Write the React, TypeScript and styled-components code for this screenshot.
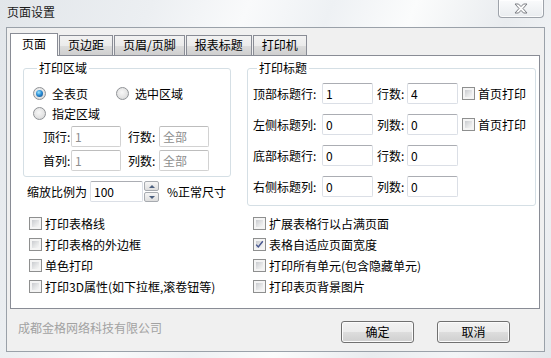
import React, { FC } from 'react';
import { styled, createGlobalStyle } from 'styled-components';

const FONT = `"Noto Sans CJK SC", "Microsoft YaHei", "DejaVu Sans", sans-serif`;

const GlobalStyle = createGlobalStyle`
  html, body {
    margin: 0;
    padding: 0;
  }
  body {
    width: 551px;
    height: 358px;
    overflow: hidden;
    font-family: ${FONT};
    font-size: 12px;
    color: #000;
  }
  * {
    box-sizing: border-box;
  }
`;

const Window = styled.div`
  width: 551px;
  height: 358px;
  display: flex;
  flex-direction: column;
  background: linear-gradient(
    112deg,
    #e2e6ea 0%,
    #eceff2 22%,
    #f9fafb 36%,
    #eef1f4 48%,
    #fbfcfc 60%,
    #e9ecef 74%,
    #f3f5f7 86%,
    #e4e7eb 100%
  );
`;

const TitleBar = styled.div`
  height: 27px;
  flex: none;
  display: flex;
  align-items: flex-start;
  justify-content: space-between;
  padding: 0 7px 0 7px;
`;

const Title = styled.div`
  margin-top: 4px;
  line-height: 16px;
  color: #1b1b1b;
`;

const CloseButton = styled.div`
  width: 46px;
  height: 18px;
  border: 1px solid #9ea3aa;
  border-top: none;
  border-radius: 0 0 4px 4px;
  background: linear-gradient(#fafbfc, #e9ecef);
  box-shadow: inset 0 0 0 1px rgba(255, 255, 255, 0.8);
  display: flex;
  align-items: center;
  justify-content: center;
`;

const Client = styled.div`
  flex: 1;
  margin: 0 6px 6px 6px;
  border: 1px solid #9aa1a9;
  background: #f0f0f0;
  display: flex;
  flex-direction: column;
  padding: 5px 4px 0 3px;
`;

const TabStrip = styled.div`
  height: 22px;
  flex: none;
  display: flex;
  align-items: flex-end;
  position: relative;
  z-index: 1;
`;

const Tab = styled.div<{ $active?: boolean }>`
  height: ${(p) => (p.$active ? 23 : 20)}px;
  margin-bottom: ${(p) => (p.$active ? -1 : 0)}px;
  padding: 0 ${(p) => (p.$active ? 11 : 8)}px;
  border: 1px solid #898c95;
  border-bottom: none;
  background: ${(p) =>
    p.$active
      ? '#fff'
      : 'linear-gradient(#f2f2f2 0%, #ebebeb 50%, #dddddd 50%, #cfcfcf 100%)'};
  line-height: ${(p) => (p.$active ? 20 : 18)}px;
  white-space: nowrap;
  & + & {
    margin-left: 1px;
  }
`;

const Panel = styled.div`
  height: 254px;
  flex: none;
  border: 1px solid #898c95;
  background: #fff;
  display: flex;
  flex-direction: column;
`;

const TopSection = styled.div`
  display: flex;
  align-items: flex-start;
  padding: 4px 0 0 12px;
  gap: 16px;
`;

const Column = styled.div<{ $w: number }>`
  width: ${(p) => p.$w}px;
  display: flex;
  flex-direction: column;
`;

const Group = styled.fieldset<{ $pl: number; $pb: number }>`
  margin: 0;
  padding: 0 0 ${(p) => p.$pb}px ${(p) => p.$pl}px;
  border: 1px solid #d5dfe5;
  border-radius: 3px;
  min-width: 0;
`;

const Legend = styled.legend`
  margin-left: 4px;
  padding: 0 2px;
  line-height: 16px;
  height: 16px;
`;

const Row = styled.div<{ $mt?: number; $ml?: number; $h?: number }>`
  display: flex;
  align-items: center;
  height: ${(p) => p.$h ?? 21}px;
  margin-top: ${(p) => p.$mt ?? 0}px;
  margin-left: ${(p) => p.$ml ?? 0}px;
  white-space: nowrap;
`;

const Label = styled.span<{ $w?: number; $ml?: number }>`
  display: inline-block;
  width: ${(p) => (p.$w ? `${p.$w}px` : 'auto')};
  margin-left: ${(p) => p.$ml ?? 0}px;
  line-height: 16px;
  flex: none;
`;

const Field = styled.input<{ $w: number }>`
  width: ${(p) => p.$w}px;
  height: 21px;
  flex: none;
  margin: 0;
  padding: 0 3px;
  border: 1px solid #dbdfe6;
  border-top-color: #abadb3;
  border-radius: 2px;
  background: #fff;
  font-family: ${FONT};
  font-size: 12px;
  color: #000;
  outline: none;
  &:disabled {
    color: #8e8e8e;
    border-color: #d2d2d2;
    border-top-color: #bdbdbd;
    background: #fff;
  }
`;

const RadioItem = styled.label<{ $w?: number }>`
  display: flex;
  align-items: center;
  width: ${(p) => (p.$w ? `${p.$w}px` : 'auto')};
  flex: none;
`;

const RadioDot = styled.span<{ $checked?: boolean }>`
  width: 13px;
  height: 13px;
  border-radius: 50%;
  border: 1px solid #8f9296;
  background: radial-gradient(circle at 45% 40%, #f7f7f7 0%, #e4e4e4 55%, #cfd1d3 100%);
  position: relative;
  flex: none;
  margin-right: 6px;
  &::after {
    content: '';
    display: ${(p) => (p.$checked ? 'block' : 'none')};
    position: absolute;
    left: 2px;
    top: 2px;
    width: 7px;
    height: 7px;
    border-radius: 50%;
    background: radial-gradient(circle at 40% 35%, #9ee6ff 0%, #2b8ed6 45%, #0b3f7c 100%);
  }
`;

const CheckBox = styled.span`
  width: 13px;
  height: 13px;
  flex: none;
  border: 1px solid #8e8f8f;
  padding: 2px;
  background: linear-gradient(135deg, #c9cbcf 0%, #e6e7e8 60%, #f6f6f6 100%) content-box, #f4f4f4;
  position: relative;
  margin-right: 3px;
  svg {
    position: absolute;
    left: 0;
    top: 0;
  }
`;

const SpinWrap = styled.div`
  width: 15px;
  height: 21px;
  margin-left: 1px;
  display: flex;
  flex-direction: column;
  gap: 1px;
  flex: none;
`;

const SpinButton = styled.div<{ $down?: boolean }>`
  flex: 1;
  border: 1px solid #a7abb0;
  border-radius: 2px;
  background: linear-gradient(#f6f6f6, #dedede);
  display: flex;
  align-items: center;
  justify-content: center;
  &::after {
    content: '';
    width: 0;
    height: 0;
    border-left: 3px solid transparent;
    border-right: 3px solid transparent;
    ${(p) =>
      p.$down ? 'border-top: 3px solid #4c607f;' : 'border-bottom: 3px solid #4c607f;'}
  }
`;

const OptionGrid = styled.div`
  display: grid;
  grid-template-columns: 224px 1fr;
  grid-auto-rows: 21px;
  margin-top: 7px;
  padding-left: 18px;
`;

const OptionItem = styled.label<{ $ml?: number }>`
  display: flex;
  align-items: center;
  white-space: nowrap;
  margin-left: ${(p) => p.$ml ?? 0}px;
`;

const Footer = styled.div`
  flex: 1;
  display: flex;
  align-items: flex-start;
  padding: 0 30px 0 8px;
`;

const Company = styled.div`
  margin-top: 11px;
  line-height: 16px;
  color: #a2a2a2;
`;

const Buttons = styled.div`
  margin-left: auto;
  margin-top: 12px;
  display: flex;
  gap: 23px;
`;

const PushButton = styled.button`
  width: 73px;
  height: 22px;
  margin: 0;
  padding: 0;
  border: 1px solid #707070;
  border-radius: 3px;
  background: linear-gradient(#f2f2f2 0%, #ebebeb 50%, #dddddd 50%, #cfcfcf 100%);
  box-shadow: inset 0 0 0 1px #fbfbfb;
  font-family: ${FONT};
  font-size: 12px;
  color: #000;
  line-height: 18px;
`;

const Radio: FC<{ label: string; checked?: boolean; w?: number }> = ({ label, checked, w }) => (
  <RadioItem $w={w}>
    <RadioDot $checked={checked} />
    <span>{label}</span>
  </RadioItem>
);

const Check: FC<{ checked?: boolean }> = ({ checked }) => (
  <CheckBox>
    {checked && (
      <svg width="11" height="11" viewBox="0 0 11 11">
        <path d="M2.2 5.6 L4.3 8 L8.8 2.2" fill="none" stroke="#46558f" strokeWidth="1.4" />
      </svg>
    )}
  </CheckBox>
);

const Option: FC<{ label: string; checked?: boolean; ml?: number }> = ({ label, checked, ml }) => (
  <OptionItem $ml={ml}>
    <Check checked={checked} />
    <span>{label}</span>
  </OptionItem>
);

const CloseGlyph: FC = () => (
  <svg width="14" height="11" viewBox="0 0 14 11">
    <polygon
      points="1,1 4.5,1 7,3.6 9.5,1 13,1 9,5.5 13,10 9.5,10 7,7.4 4.5,10 1,10 5,5.5"
      fill="#fbfbfb"
      stroke="#7a7d82"
      strokeWidth="1"
      strokeLinejoin="round"
    />
  </svg>
);

const titleRows = [
  { label: '顶部标题行:', first: '1', countLabel: '行数:', count: '4', firstPage: true },
  { label: '左侧标题列:', first: '0', countLabel: '列数:', count: '0', firstPage: true },
  { label: '底部标题行:', first: '0', countLabel: '行数:', count: '0', firstPage: false },
  { label: '右侧标题列:', first: '0', countLabel: '列数:', count: '0', firstPage: false },
];

const options: [string, boolean][] = [
  ['打印表格线', false],
  ['扩展表格行以占满页面', false],
  ['打印表格的外边框', false],
  ['表格自适应页面宽度', true],
  ['单色打印', false],
  ['打印所有单元(包含隐藏单元)', false],
  ['打印3D属性(如下拉框,滚卷钮等)', false],
  ['打印表页背景图片', false],
];

const tabs = ['页面', '页边距', '页眉/页脚', '报表标题', '打印机'];

const App: FC = () => (
  <>
    <GlobalStyle />
    <Window>
      <TitleBar>
        <Title>页面设置</Title>
        <CloseButton>
          <CloseGlyph />
        </CloseButton>
      </TitleBar>
      <Client>
        <TabStrip>
          {tabs.map((t, i) => (
            <Tab key={t} $active={i === 0}>
              {t}
            </Tab>
          ))}
        </TabStrip>
        <Panel>
          <TopSection>
            <Column $w={208}>
              <Group $pl={9} $pb={5}>
                <Legend>打印区域</Legend>
                <Row $mt={7} $h={20}>
                  <Radio label="全表页" checked w={83} />
                  <Radio label="选中区域" />
                </Row>
                <Row $h={20}>
                  <Radio label="指定区域" />
                </Row>
                <Row $mt={3} $ml={10}>
                  <Label $w={28}>顶行:</Label>
                  <Field $w={50} disabled defaultValue="1" />
                  <Label $w={31} $ml={7}>行数:</Label>
                  <Field $w={50} disabled defaultValue="全部" />
                </Row>
                <Row $mt={3} $ml={10}>
                  <Label $w={28}>首列:</Label>
                  <Field $w={50} disabled defaultValue="1" />
                  <Label $w={31} $ml={7}>列数:</Label>
                  <Field $w={50} disabled defaultValue="全部" />
                </Row>
              </Group>
              <Row $mt={4} $ml={4}>
                <Label $w={63}>缩放比例为</Label>
                <Field $w={53} readOnly defaultValue="100" />
                <SpinWrap>
                  <SpinButton />
                  <SpinButton $down />
                </SpinWrap>
                <Label $ml={8}>%正常尺寸</Label>
              </Row>
            </Column>
            <Column $w={289}>
              <Group $pl={5} $pb={8}>
                <Legend>打印标题</Legend>
                {titleRows.map((r, i) => (
                  <Row key={r.label} $mt={i === 0 ? 7 : 10}>
                    <Label $w={69}>{r.label}</Label>
                    <Field $w={51} readOnly defaultValue={r.first} />
                    <Label $w={30} $ml={4}>{r.countLabel}</Label>
                    <Field $w={51} readOnly defaultValue={r.count} />
                    {r.firstPage && <Option label="首页打印" ml={4} />}
                  </Row>
                ))}
              </Group>
            </Column>
          </TopSection>
          <OptionGrid>
            {options.map(([label, checked]) => (
              <Option key={label} label={label} checked={checked} />
            ))}
          </OptionGrid>
        </Panel>
        <Footer>
          <Company>成都金格网络科技有限公司</Company>
          <Buttons>
            <PushButton>确定</PushButton>
            <PushButton>取消</PushButton>
          </Buttons>
        </Footer>
      </Client>
    </Window>
  </>
);

export default App;
